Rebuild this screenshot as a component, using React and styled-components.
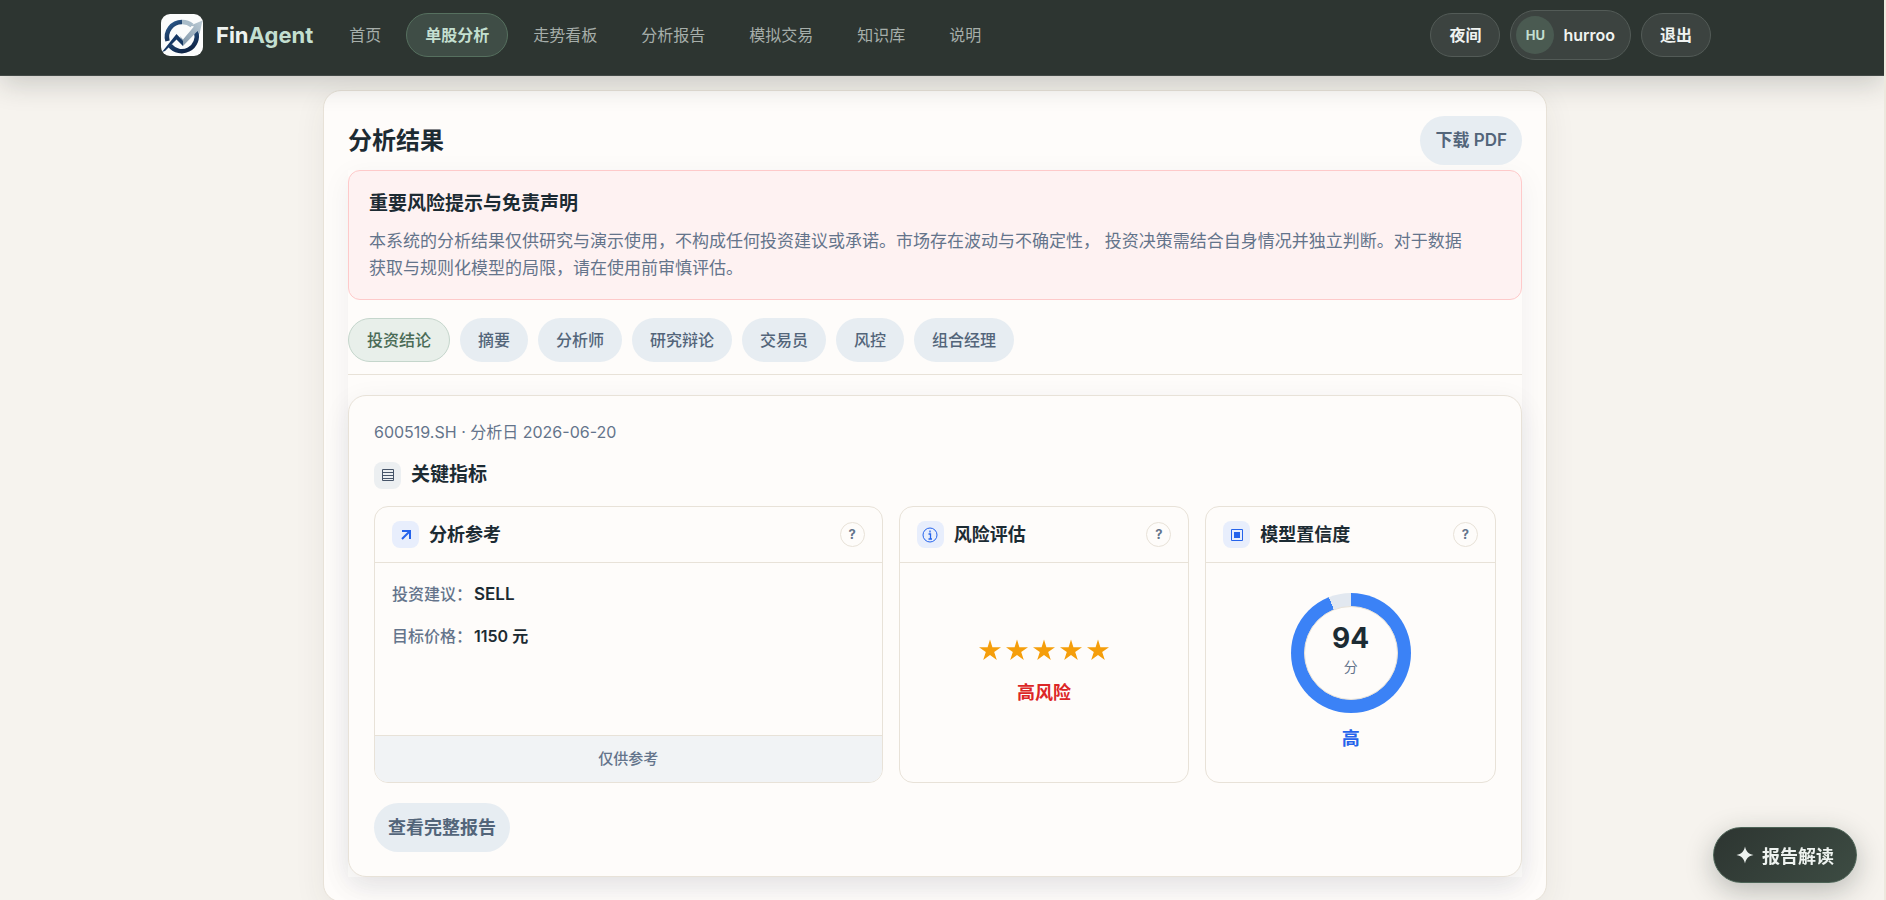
import React from 'react'
import styled, { createGlobalStyle, ThemeProvider } from 'styled-components'

const theme = {
    ink: '#1c2b33',
    muted: '#64748b',
    slate: '#53657a',
    line: '#e8e2d8',
    paper: '#fefcfa',
    page: '#f6f3ee',
    pill: '#e7edf2',
    blue: '#2563eb',
}

const GlobalStyle = createGlobalStyle`
    *, *::before, *::after {
        box-sizing: border-box;
    }

    body {
        margin: 0;
        background-color: ${theme.page};
        color: ${theme.ink};
        font-family: Inter, "Noto Sans CJK SC", sans-serif;
        font-size: 16px;
        line-height: 24px;
    }

    button {
        font-family: inherit;
        cursor: pointer;
    }

    h1, h2, h3, p, dl, dd {
        margin: 0;
    }
`;

const Page = styled.div`
    height: 100vh;
    overflow-y: auto;
    scrollbar-width: none;
    border-right: 2px solid #ede9de;
`;

const Header = styled.header`
    position: relative;
    z-index: 10;
    padding: 10px 12px 15px 0;
    background-color: #2d3531;
    border-bottom: 1px solid #434a47;
    box-shadow: 0 8px 28px rgba(30, 40, 36, 0.2);
`;

const HeaderInner = styled.div`
    max-width: 1550px;
    margin: 0 auto;
    display: flex;
    align-items: center;
`;

const Brand = styled.a`
    display: flex;
    align-items: center;
    gap: 13px;
    margin-right: 17px;
    font-size: 22px;
    font-weight: 700;
    color: #eef3f0;
    text-decoration: none;

    span span {
        color: #c3dfd0;
    }
`;

const Nav = styled.nav`
    display: flex;
    flex: 1;
    gap: 6px;
`;

const NavLink = styled.a`
    padding: 9px 18px;
    border: 1px solid ${({ $active }) => ($active ? '#56705f' : 'transparent')};
    border-radius: 22px;
    background-color: ${({ $active }) => ($active ? '#3f4d46' : 'transparent')};
    color: ${({ $active }) => ($active ? '#c3dfd0' : '#a6aeaa')};
    font-weight: ${({ $active }) => ($active ? 700 : 400)};
    text-decoration: none;
    white-space: nowrap;
`;

const Account = styled.div`
    display: flex;
    align-items: center;
    gap: 10px;
`;

const HeaderButton = styled.button`
    padding: 9px 18px;
    border: 1px solid #535b57;
    border-radius: 22px;
    background-color: #3c4340;
    color: #f0f3f1;
    font-size: 16px;
    font-weight: 700;
    line-height: 24px;
`;

const UserChip = styled(HeaderButton)`
    display: flex;
    align-items: center;
    gap: 9px;
    padding: 5px 15px 5px 5px;
    border-radius: 25px;
    font-weight: 600;
`;

const Avatar = styled.span`
    width: 38px;
    height: 38px;
    border-radius: 50%;
    background-color: #4a5a51;
    color: #c3dfd0;
    font-size: 13px;
    font-weight: 700;
    line-height: 38px;
`;

const Main = styled.main`
    padding: 14px 14px 0 0;
`;

const ResultCard = styled.section`
    max-width: 1224px;
    margin: 0 auto;
    padding: 25px 24px 24px;
    border: 1px solid ${({ theme }) => theme.line};
    border-radius: 18px;
    background-color: ${({ theme }) => theme.paper};
    box-shadow: 0 8px 32px rgba(60, 50, 40, 0.07);
`;

const TitleRow = styled.div`
    display: flex;
    align-items: center;
    justify-content: space-between;
    margin-bottom: 5px;
`;

const Title = styled.h1`
    font-size: 24px;
    font-weight: 700;
    line-height: 36px;
`;

const SoftButton = styled.button`
    padding: 12px ${({ $large }) => ($large ? 14 : 15)}px;
    border: 0;
    border-radius: 25px;
    background-color: ${({ theme }) => theme.pill};
    color: ${({ theme }) => theme.slate};
    font-size: ${({ $large }) => ($large ? 18 : 17)}px;
    font-weight: ${({ $large }) => ($large ? 700 : 600)};
    line-height: 25px;
`;

const ResultBody = styled.div`
    box-shadow: 0 8px 28px rgba(30, 40, 60, 0.06);
`;

const Notice = styled.div`
    padding: 19px 20px 17px;
    border: 1px solid #fecaca;
    border-radius: 12px;
    background-color: #fef2f2;
`;

const NoticeTitle = styled.h2`
    margin-bottom: 10px;
    font-size: 19px;
    font-weight: 700;
    line-height: 28px;
`;

const NoticeText = styled.p`
    color: ${({ theme }) => theme.muted};
    font-size: 17px;
    line-height: 27px;
`;

const Tabs = styled.div`
    display: flex;
    gap: 10px;
    padding: 18px 0 12px;
    margin-bottom: 20px;
    border-bottom: 1px solid ${({ theme }) => theme.line};
`;

const Tab = styled.button`
    padding: 9px ${({ $active }) => ($active ? 18 : 17)}px;
    border: 1px solid ${({ $active }) => ($active ? '#c5d6cc' : 'transparent')};
    border-radius: 22px;
    background-color: ${({ theme, $active }) => ($active ? '#e8efea' : theme.pill)};
    color: ${({ theme, $active }) => ($active ? '#4a6b56' : theme.slate)};
    font-size: 16px;
    font-weight: 500;
    line-height: 24px;
`;

const Panel = styled.section`
    padding: 24px 25px;
    border: 1px solid ${({ theme }) => theme.line};
    border-radius: 18px;
    background-color: ${({ theme }) => theme.paper};
    box-shadow: 0 8px 28px rgba(30, 40, 60, 0.08);
`;

const Meta = styled.p`
    margin-bottom: 16px;
    color: ${({ theme }) => theme.muted};
    font-size: 16px;
    line-height: 25px;
`;

const SectionHead = styled.div`
    display: flex;
    align-items: center;
    gap: 10px;
    margin-bottom: 17px;
`;

const SectionTitle = styled.h2`
    font-size: 19px;
    font-weight: 700;
    line-height: 28px;
`;

const IconTile = styled.span`
    display: flex;
    align-items: center;
    justify-content: center;
    width: 27px;
    height: 27px;
    border-radius: 8px;
    background-color: ${({ $plain }) => ($plain ? '#eceff1' : '#e8eefc')};
    color: ${({ theme, $plain }) => ($plain ? '#475569' : theme.blue)};
`;

const MetricGrid = styled.div`
    display: grid;
    grid-template-columns: 7fr 4fr 4fr;
    gap: 16px;
    margin-bottom: 20px;
`;

const MetricCard = styled.article`
    display: flex;
    flex-direction: column;
    min-height: 277px;
    border: 1px solid ${({ theme }) => theme.line};
    border-radius: 14px;
    overflow: hidden;
`;

const MetricHead = styled.header`
    display: flex;
    align-items: center;
    gap: 10px;
    padding: 14px 17px;
    border-bottom: 1px solid ${({ theme }) => theme.line};
`;

const MetricTitle = styled.h3`
    flex: 1;
    font-size: 18px;
    font-weight: 700;
    line-height: 27px;
`;

const HelpButton = styled.button`
    width: 25px;
    height: 25px;
    padding: 0;
    border: 1px solid ${({ theme }) => theme.line};
    border-radius: 50%;
    background-color: transparent;
    color: ${({ theme }) => theme.muted};
    font-size: 13px;
    font-weight: 700;
    line-height: 23px;
`;

const Facts = styled.dl`
    display: flex;
    flex: 1;
    flex-direction: column;
    gap: 17px;
    padding: 19px 17px;
`;

const Fact = styled.div`
    display: flex;
    gap: 2px;
    font-weight: 500;
    line-height: 25px;

    dt {
        color: ${({ theme }) => theme.muted};
    }

    dd {
        font-size: ${({ $strong }) => ($strong ? 17 : 16)}px;
        font-weight: 600;
    }
`;

const MetricFoot = styled.footer`
    padding: 11px;
    border-top: 1px solid ${({ theme }) => theme.line};
    background-color: #f1f3f5;
    color: ${({ theme }) => theme.muted};
    font-size: 15px;
    font-weight: 500;
    text-align: center;
`;

const MetricCenter = styled.div`
    display: flex;
    flex: 1;
    flex-direction: column;
    align-items: center;
    justify-content: center;
    gap: ${({ $gap }) => $gap}px;
`;

const Stars = styled.div`
    display: flex;
    gap: 5px;
    color: #f59e0b;
`;

const Level = styled.strong`
    color: ${({ theme, $danger }) => ($danger ? '#dc2626' : theme.blue)};
    font-size: 18px;
    font-weight: 700;
    line-height: 28px;
`;

const Ring = styled.div`
    display: flex;
    align-items: center;
    justify-content: center;
    width: 120px;
    height: 120px;
    border-radius: 50%;
`;

const RingHole = styled.div`
    width: 94px;
    height: 94px;
    padding-top: 14px;
    border: 1px solid ${({ theme }) => theme.line};
    border-radius: 50%;
    background-color: ${({ theme }) => theme.paper};
    text-align: center;
`;

const Score = styled.div`
    font-size: 28px;
    font-weight: 700;
    line-height: 34px;
`;

const Unit = styled.div`
    color: ${({ theme }) => theme.muted};
    font-size: 14px;
    line-height: 24px;
`;

const FloatingButton = styled.button`
    position: fixed;
    right: 29px;
    bottom: 17px;
    display: flex;
    align-items: center;
    gap: 8px;
    height: 56px;
    padding: 0 22px;
    border: 1px solid #4c6356;
    border-radius: 28px;
    background: linear-gradient(135deg, #2d3531, #3d4c43);
    box-shadow: 0 8px 28px rgba(30, 40, 36, 0.28);
    color: #eef3f0;
    font-size: 18px;
    font-weight: 700;
`;

const navItems = ['首页', '单股分析', '走势看板', '分析报告', '模拟交易', '知识库', '说明'];
const tabs = ['投资结论', '摘要', '分析师', '研究辩论', '交易员', '风控', '组合经理'];

const Logo = () => (
    <svg width="42" height="42" viewBox="0 0 42 42" aria-hidden="true">
        <defs>
            <linearGradient id="ring" x1="0" y1="0" x2="0.6" y2="1">
                <stop offset="0" stopColor="#2f5f93" />
                <stop offset="1" stopColor="#0f2547" />
            </linearGradient>
            <linearGradient id="arrow" x1="0" y1="1" x2="1" y2="0">
                <stop offset="0" stopColor="#7f95a8" />
                <stop offset="1" stopColor="#bccbd5" />
            </linearGradient>
        </defs>
        <rect width="42" height="42" rx="9" fill="#fbfcfc" />
        <path d="M21 8A15 15 0 0 0 6.500 27" fill="none" stroke="url(#ring)" strokeWidth="4.500" />
        <path d="M9 31.500A15 15 0 0 0 35 17.500" fill="none" stroke="url(#ring)" strokeWidth="4.500" />
        <path d="M21 8A15 15 0 0 1 31 11.500" fill="none" stroke="#a9bcc9" strokeWidth="4.500" />
        <path d="M19 22L22 25.500L33 12.500L29.500 11.500L41.500 6.500L38.500 20L36.500 17L22 32Z" fill="url(#arrow)" />
        <path d="M1 38L15.500 20L22 27V32L15.500 25.500L4 37Z" fill="#163864" />
    </svg>
)

const TableIcon = () => (
    <svg width="14" height="14" viewBox="0 0 14 14" fill="none" stroke="currentColor" aria-hidden="true">
        <path d="M1.500 1.500H12.500V12.500H1.500ZM1.500 4.500H12.500M1.500 7.500H12.500M1.500 10.500H12.500" />
    </svg>
)

const ArrowIcon = () => (
    <svg width="12" height="12" viewBox="0 0 12 12" fill="none" stroke="currentColor" strokeWidth="2" aria-hidden="true">
        <path d="M2 2H10V10M10 2L2 10" />
    </svg>
)

const InfoIcon = () => (
    <svg width="16" height="16" viewBox="0 0 16 16" fill="none" stroke="currentColor" aria-hidden="true">
        <circle cx="8" cy="8" r="7" />
        <path d="M8 3.500V5.500M6.500 7H8.500V12M6.500 12H10" strokeWidth="1.300" />
    </svg>
)

const SquareIcon = () => (
    <svg width="14" height="14" viewBox="0 0 14 14" fill="none" stroke="currentColor" aria-hidden="true">
        <path d="M1.500 1.500H12.500V12.500H1.500Z" />
        <path d="M4 4H10V10H4Z" fill="currentColor" stroke="none" />
    </svg>
)

const Star = () => (
    <svg width="22" height="22" viewBox="0 0 22 22" fill="currentColor" aria-hidden="true">
        <path d="M11 0.500L13.400 8.300H22L15.200 13L17.800 21L11 16.100L4.200 21L6.800 13L0 8.300H8.600Z" />
    </svg>
)

const Spark = () => (
    <svg width="18" height="18" viewBox="0 0 18 18" fill="currentColor" aria-hidden="true">
        <path d="M9 0.500C10 5.500 12.500 8 17.500 9C12.500 10 10 12.500 9 17.500C8 12.500 5.500 10 0.500 9C5.500 8 8 5.500 9 0.500Z" />
    </svg>
)

const Metric = ({ icon, title, children }) => (
    <MetricCard>
        <MetricHead>
            <IconTile>{icon}</IconTile>
            <MetricTitle>{title}</MetricTitle>
            <HelpButton type="button" aria-label={`${title}说明`}>?</HelpButton>
        </MetricHead>
        {children}
    </MetricCard>
)

const ScoreRing = ({ score }) => (
    <Ring style={{ background: `conic-gradient(#3b82f6 ${score}%, #e2e8f0 0)` }}>
        <RingHole>
            <Score>{score}</Score>
            <Unit>分</Unit>
        </RingHole>
    </Ring>
)

const App = () => (
    <ThemeProvider theme={theme}>
        <GlobalStyle />
        <Page>
            <Header>
                <HeaderInner>
                    <Brand href="#">
                        <Logo />
                        <span>Fin<span>Agent</span></span>
                    </Brand>
                    <Nav>
                        {navItems.map((item) => (
                            <NavLink key={item} href="#" $active={item === '单股分析'}>{item}</NavLink>
                        ))}
                    </Nav>
                    <Account>
                        <HeaderButton type="button">夜间</HeaderButton>
                        <UserChip type="button">
                            <Avatar>HU</Avatar>
                            hurroo
                        </UserChip>
                        <HeaderButton type="button">退出</HeaderButton>
                    </Account>
                </HeaderInner>
            </Header>
            <Main>
                <ResultCard>
                    <TitleRow>
                        <Title>分析结果</Title>
                        <SoftButton type="button">下载 PDF</SoftButton>
                    </TitleRow>
                    <ResultBody>
                        <Notice>
                            <NoticeTitle>重要风险提示与免责声明</NoticeTitle>
                            <NoticeText>
                                本系统的分析结果仅供研究与演示使用，不构成任何投资建议或承诺。市场存在波动与不确定性，
                                {' '}投资决策需结合自身情况并独立判断。对于数据
                                <br />
                                获取与规则化模型的局限，请在使用前审慎评估。
                            </NoticeText>
                        </Notice>
                        <Tabs>
                            {tabs.map((tab) => (
                                <Tab key={tab} type="button" $active={tab === '投资结论'}>{tab}</Tab>
                            ))}
                        </Tabs>
                        <Panel>
                            <Meta>600519.SH · 分析日 2026-06-20</Meta>
                            <SectionHead>
                                <IconTile $plain><TableIcon /></IconTile>
                                <SectionTitle>关键指标</SectionTitle>
                            </SectionHead>
                            <MetricGrid>
                                <Metric icon={<ArrowIcon />} title="分析参考">
                                    <Facts>
                                        <Fact $strong><dt>投资建议：</dt><dd>SELL</dd></Fact>
                                        <Fact><dt>目标价格：</dt><dd>1150 元</dd></Fact>
                                    </Facts>
                                    <MetricFoot>仅供参考</MetricFoot>
                                </Metric>
                                <Metric icon={<InfoIcon />} title="风险评估">
                                    <MetricCenter $gap={18}>
                                        <Stars role="img" aria-label="5 星">
                                            {[1, 2, 3, 4, 5].map((n) => <Star key={n} />)}
                                        </Stars>
                                        <Level $danger>高风险</Level>
                                    </MetricCenter>
                                </Metric>
                                <Metric icon={<SquareIcon />} title="模型置信度">
                                    <MetricCenter $gap={12}>
                                        <ScoreRing score={94} />
                                        <Level>高</Level>
                                    </MetricCenter>
                                </Metric>
                            </MetricGrid>
                            <SoftButton type="button" $large>查看完整报告</SoftButton>
                        </Panel>
                    </ResultBody>
                </ResultCard>
            </Main>
            <FloatingButton type="button">
                <Spark />
                报告解读
            </FloatingButton>
        </Page>
    </ThemeProvider>
)

export default App
